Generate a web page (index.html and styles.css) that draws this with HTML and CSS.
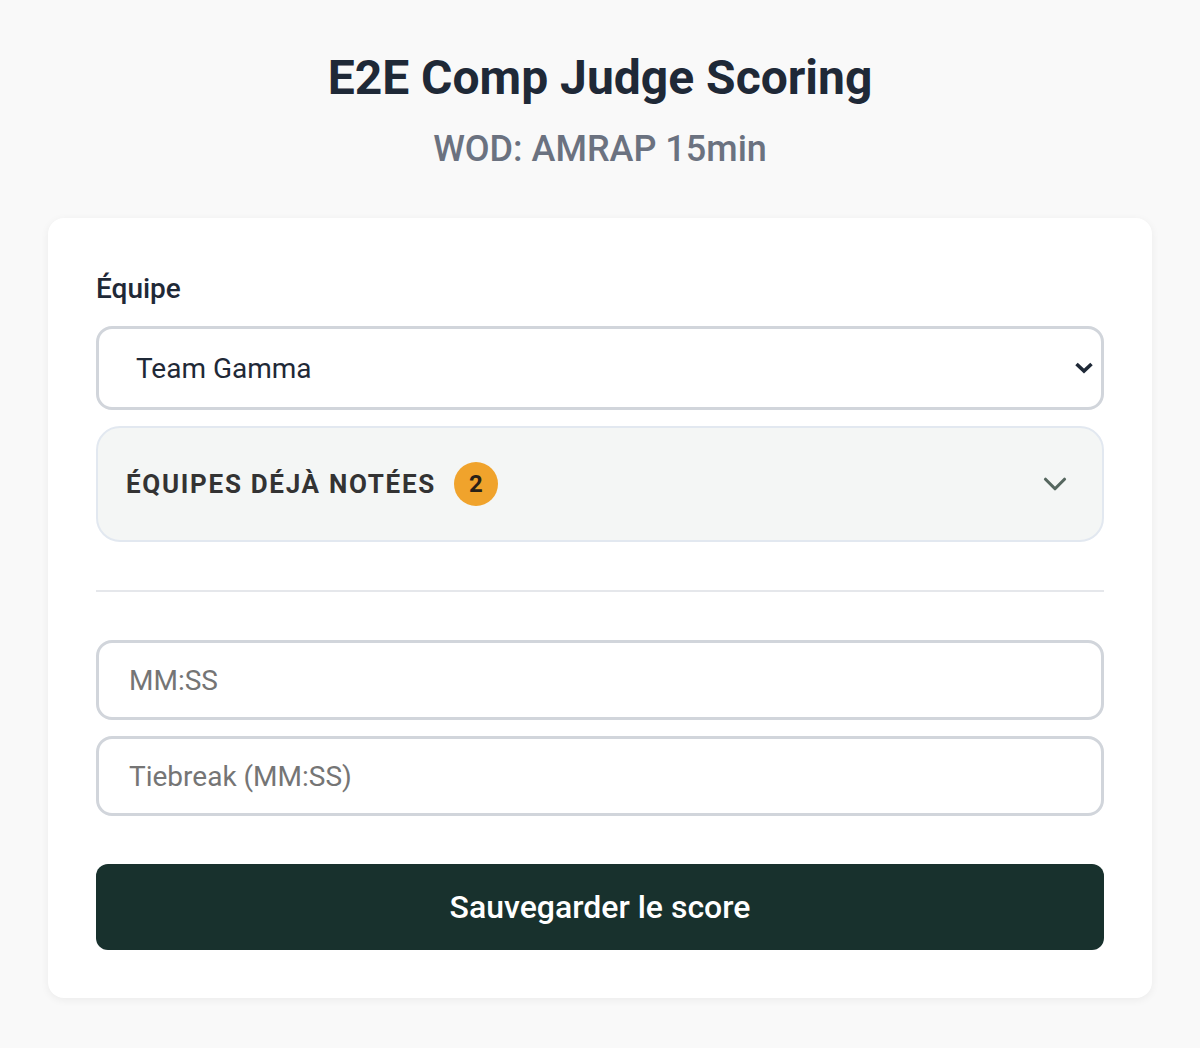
FILE: index.html
```html
<!DOCTYPE html>
<html lang="fr">
<head>
<meta charset="utf-8">
<title>E2E Comp Judge Scoring</title>
<link rel="stylesheet" href="styles.css">
</head>
<body>
<main class="page">
  <header class="header">
    <h1 class="title">E2E Comp Judge Scoring</h1>
    <p class="subtitle">WOD: AMRAP 15min</p>
  </header>
  <section class="card">
    <label class="label" for="team">Équipe</label>
    <div class="select-wrap">
      <select id="team" class="select">
        <option>Team Gamma</option>
      </select>
      <svg class="select-arrow" width="20" height="14" viewBox="0 0 20 14" aria-hidden="true"><path d="M2.5 3 L10 10 L17.5 3" fill="none" stroke="#1f2937" stroke-width="3.6" stroke-linecap="butt" stroke-linejoin="miter"/></svg>
    </div>
    <div class="accordion">
      <div class="acc-left">
        <span class="acc-title">Équipes déjà notées</span>
        <span class="badge">2</span>
      </div>
      <svg class="acc-chevron" width="38" height="38" viewBox="0 0 24 24" aria-hidden="true"><path d="m6 9 6 6 6-6" fill="none" stroke="#56675f" stroke-width="2" stroke-linecap="round" stroke-linejoin="round"/></svg>
    </div>
    <hr class="divider">
    <div class="fields">
      <input class="input" type="text" placeholder="MM:SS">
      <input class="input" type="text" placeholder="Tiebreak (MM:SS)">
    </div>
    <button class="btn" type="button">Sauvegarder le score</button>
  </section>
</main>
</body>
</html>
```
FILE: styles.css
```css
* { box-sizing: border-box; }
html, body {
  margin: 0;
  padding: 0;
  background: #f9f9f9;
  font-family: Roboto, "Liberation Sans", Arial, sans-serif;
  color: #1f2937;
}
.page {
  padding: 50px 48px 50px;
}
.header {
  text-align: center;
}
.title {
  margin: 0;
  font-size: 48px;
  line-height: 56px;
  font-weight: 700;
  color: #1f2937;
}
.subtitle {
  margin: 22px 0 0;
  font-size: 36px;
  line-height: 42px;
  font-weight: 500;
  color: #6b7280;
}
.card {
  margin-top: 48px;
  background: #fff;
  border-radius: 16px;
  box-shadow: 0 2px 8px rgba(0, 0, 0, 0.06);
  padding: 56px 48px 48px;
}
.label {
  display: block;
  font-size: 28px;
  line-height: 30px;
  font-weight: 500;
  color: #1f2937;
  margin-bottom: 22px;
}
.select-wrap {
  position: relative;
}
.select {
  display: block;
  width: 100%;
  height: 84px;
  appearance: none;
  -webkit-appearance: none;
  background: #fff;
  border: 3px solid #d1d5db;
  border-radius: 16px;
  padding: 0 60px 0 37px;
  font-family: inherit;
  font-size: 28px;
  color: #1f2937;
  outline: none;
}
.select-arrow {
  position: absolute;
  right: 10px;
  top: 35px;
  pointer-events: none;
}
.accordion {
  margin-top: 16px;
  height: 116px;
  background: #f4f6f5;
  border: 2px solid #e2e8f0;
  border-radius: 24px;
  padding: 0 28px 0 28px;
  display: flex;
  align-items: center;
  justify-content: space-between;
}
.acc-left {
  display: flex;
  align-items: center;
  gap: 18px;
}
.acc-title {
  font-size: 26px;
  font-weight: 700;
  text-transform: uppercase;
  letter-spacing: 1.7px;
  color: #333333;
}
.badge {
  width: 44px;
  height: 44px;
  border-radius: 50%;
  background: #f0a32c;
  color: #2a2118;
  font-size: 24px;
  font-weight: 700;
  display: flex;
  align-items: center;
  justify-content: center;
}
.acc-chevron {
  display: block;
}
.divider {
  border: 0;
  height: 2px;
  background: #e5e7eb;
  margin: 48px 0;
}
.fields {
  display: flex;
  flex-direction: column;
  gap: 16px;
}
.input {
  display: block;
  width: 100%;
  height: 80px;
  border: 3px solid #d1d5db;
  border-radius: 16px;
  padding: 0 30px;
  font-family: inherit;
  font-size: 28px;
  color: #1f2937;
  background: #fff;
  outline: none;
}
.input::placeholder {
  color: #757575;
}
.btn {
  display: block;
  width: 100%;
  margin-top: 48px;
  height: 86px;
  border: 0;
  border-radius: 12px;
  background: #18312d;
  color: #ffffff;
  font-family: inherit;
  font-size: 32px;
  font-weight: 500;
  cursor: pointer;
}
```
